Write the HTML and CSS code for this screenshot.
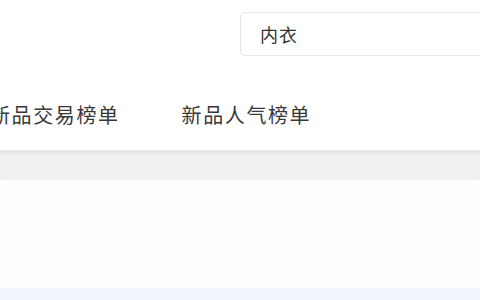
FILE: index.html
```
<!DOCTYPE html>
<html lang="zh">
<head>
    <meta charset="UTF-8">
    <meta name="viewport" content="width=device-width, initial-scale=1.0">
    <title>新品榜单</title>
    <link rel="stylesheet" href="styles.css">
</head>
<body>
    <div class="page">
        <div class="header">
            <div class="search-row">
                <div class="search-box">
                    <input type="text" class="search-input" value="内衣">
                </div>
            </div>
            <div class="tabs">
                <div class="tab">新品交易榜单</div>
                <div class="tab">新品人气榜单</div>
            </div>
        </div>

        <div class="divider"></div>

        <div class="content"></div>

        <div class="footer-bar"></div>
    </div>
</body>
</html>
```

FILE: styles.css
```
* {
    margin: 0;
    padding: 0;
    box-sizing: border-box;
}

html, body {
    width: 480px;
    height: 300px;
    overflow: hidden;
}

body {
    font-family: "Noto Sans CJK SC", "Noto Sans", sans-serif;
    background: #fff;
    color: #333;
}

.page {
    width: 480px;
}

.header {
    height: 150px;
    background: #fff;
}

.search-row {
    display: flex;
    padding-top: 12px;
    padding-left: 240px;
}

.search-box {
    flex: none;
    width: 300px;
    height: 44px;
    border: 1px solid #e6e6e6;
    border-radius: 5px;
    display: flex;
    align-items: center;
    padding-left: 19px;
}

.search-input {
    border: none;
    outline: none;
    background: transparent;
    font-family: inherit;
    font-size: 18px;
    letter-spacing: 1px;
    color: #333;
    width: 100%;
}

.tabs {
    display: flex;
    gap: 62px;
    margin-left: -10px;
    margin-top: 47px;
}

.tab {
    font-size: 20px;
    letter-spacing: 1.6px;
    line-height: 24px;
    color: #383838;
    white-space: nowrap;
}

.divider {
    height: 30px;
    background: #f1f1f1;
    border-top: 1px solid #eaeaea;
    box-shadow: inset 0 3px 3px -1px rgba(0, 0, 0, 0.07);
}

.content {
    height: 108px;
    background: #fefefe;
}

.footer-bar {
    height: 12px;
    background: #f2f5fd;
    border-top: 1px solid #f4f7fc;
}
```
